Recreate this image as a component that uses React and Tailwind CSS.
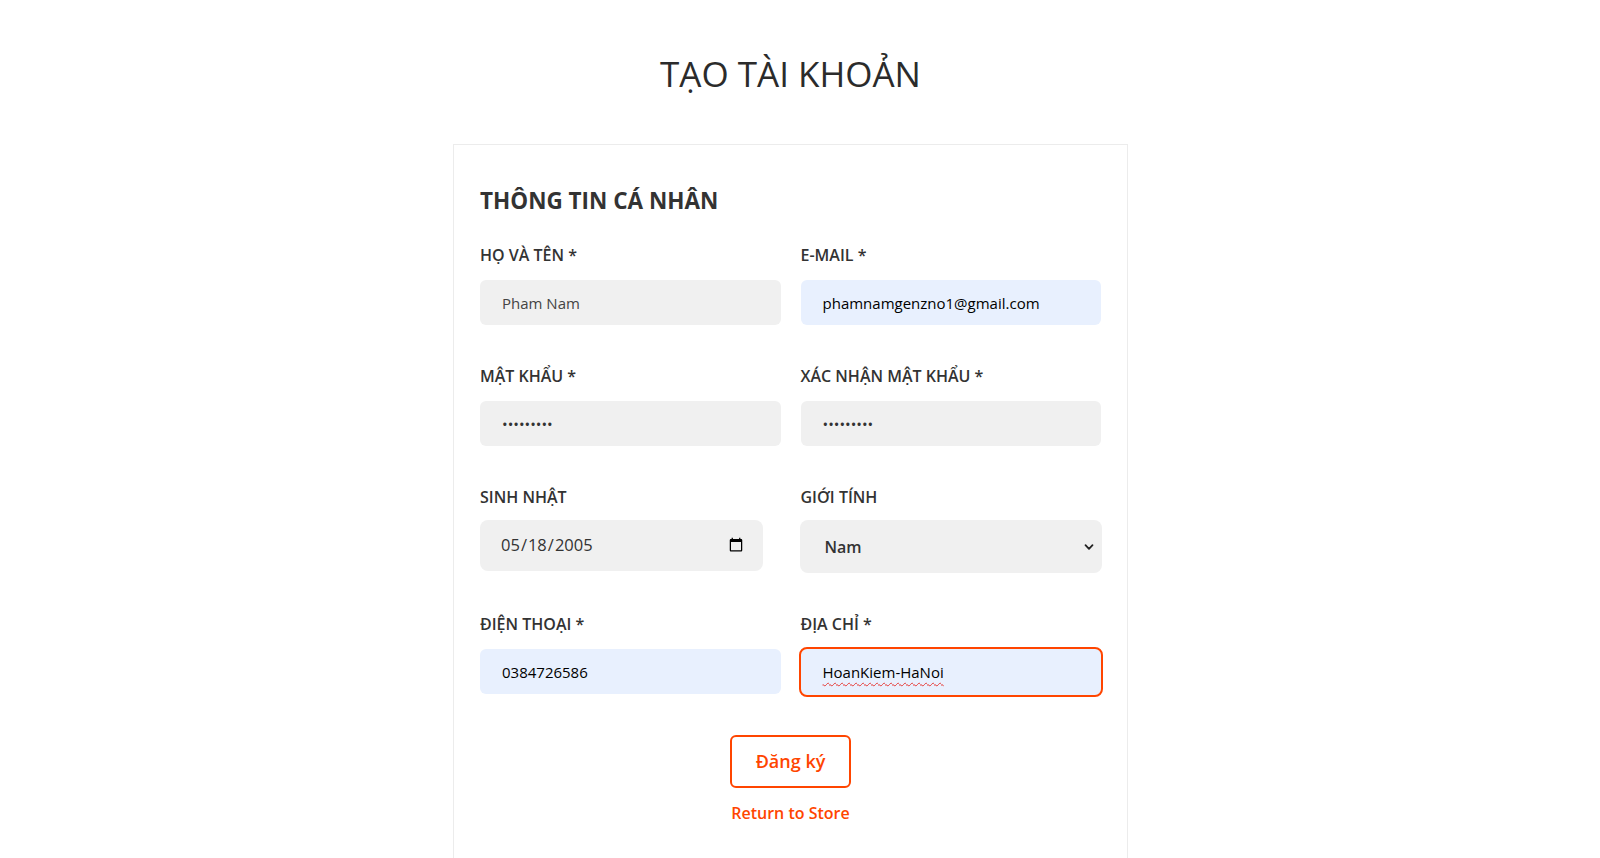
import React from 'react'

const labelCls = 'block text-base leading-6 font-semibold text-[#333]'
const inputCls = 'block w-full h-[45px] rounded-md bg-[#f0f0f0] px-[22px] text-[15px] text-[#333] outline-none'

const Field = ({ label, children, gap = 'mt-[13px]' }) => (
    <div>
        <label className={labelCls}>{label}</label>
        <div className={gap}>{children}</div>
    </div>
)

export default function App() {
    return (
        <div className="min-h-screen bg-white pr-[19px] font-['Open_Sans',sans-serif] text-[#333]">
            <h1 className="pt-[53px] text-center text-[35px] leading-[42px] font-medium text-[#2b2b2b]">TẠO TÀI KHOẢN</h1>

            <div className="mx-auto mt-[49px] w-[675px] border border-[#ececec] px-[26px] pt-[41px] pb-[60px]">
                <h2 className="text-[22.5px] leading-[29px] font-bold text-[#333]">THÔNG TIN CÁ NHÂN</h2>

                <form className="mt-[28px]" onSubmit={(e) => e.preventDefault()}>
                    <div className="grid grid-cols-2 gap-x-5 gap-y-[39px]">
                        <Field label="HỌ VÀ TÊN *">
                            <input type="text" defaultValue="Pham Nam" className={inputCls + ' text-[#444]'} />
                        </Field>
                        <Field label="E-MAIL *">
                            <input type="email" defaultValue="phamnamgenzno1@gmail.com" className="block w-full h-[45px] rounded-md bg-[#e8f0fe] px-[22px] text-[15px] text-black outline-none" />
                        </Field>

                        <Field label="MẬT KHẨU *">
                            <input type="password" defaultValue="123456789" className={inputCls} />
                        </Field>
                        <Field label="XÁC NHẬN MẬT KHẨU *">
                            <input type="password" defaultValue="123456789" className={inputCls} />
                        </Field>

                        <Field label="SINH NHẬT" gap="mt-[11px]">
                            <input type="date" defaultValue="2005-05-18" className="block w-[283px] h-[51px] rounded-lg bg-[#f0f0f0] pl-[20px] pr-[17px] text-[16.5px] font-medium text-[#333] outline-none" />
                        </Field>
                        <Field label="GIỚI TÍNH" gap="mt-[11px]">
                            <div className="relative -mx-px">
                                <select defaultValue="Nam" className="block w-full h-[53px] appearance-none rounded-lg bg-[#f0f0f0] pl-[25px] pr-[30px] text-base font-semibold text-[#333] outline-none">
                                    <option>Nam</option>
                                    <option>Nữ</option>
                                    <option>Khác</option>
                                </select>
                                <svg className="pointer-events-none absolute right-[8px] top-[22px] h-[10px] w-[10px]" viewBox="0 0 10 10" fill="none" stroke="#222" strokeWidth="1.8" strokeLinecap="round" strokeLinejoin="round">
                                    <path d="M1.5 3.2 L5 6.8 L8.5 3.2" />
                                </svg>
                            </div>
                        </Field>

                        <Field label="ĐIỆN THOẠI *">
                            <input type="tel" defaultValue="0384726586" className="block w-full h-[45px] rounded-md bg-[#e8f0fe] px-[22px] text-[15px] text-black outline-none" />
                        </Field>
                        <Field label="ĐỊA CHỈ *">
                            <div className="relative">
                                <input type="text" defaultValue="HoanKiem-HaNoi" spellCheck={false} className="block w-full h-[46px] rounded-md bg-[#e8f0fe] px-[22px] text-[15px] text-black outline-2 outline-offset-0 outline-[#ff4500]" />
                                <span className="pointer-events-none absolute left-[22px] top-0 h-[46px] text-[15px] leading-[46px] text-transparent underline decoration-wavy decoration-[#e53935] decoration-1 underline-offset-[4px]">HoanKiem-HaNoi</span>
                            </div>
                        </Field>
                    </div>

                    <div className="mt-[40px] flex flex-col items-center">
                        <button type="submit" className="rounded-md border-2 border-[#ff4500] bg-white px-6 py-[11px] text-lg leading-[27px] font-semibold text-[#ff4500]">
                            Đăng ký
                        </button>
                        <a href="#" className="mt-[13px] text-base leading-6 font-semibold text-[#ff4500]">Return to Store</a>
                    </div>
                </form>
            </div>
        </div>
    )
}
